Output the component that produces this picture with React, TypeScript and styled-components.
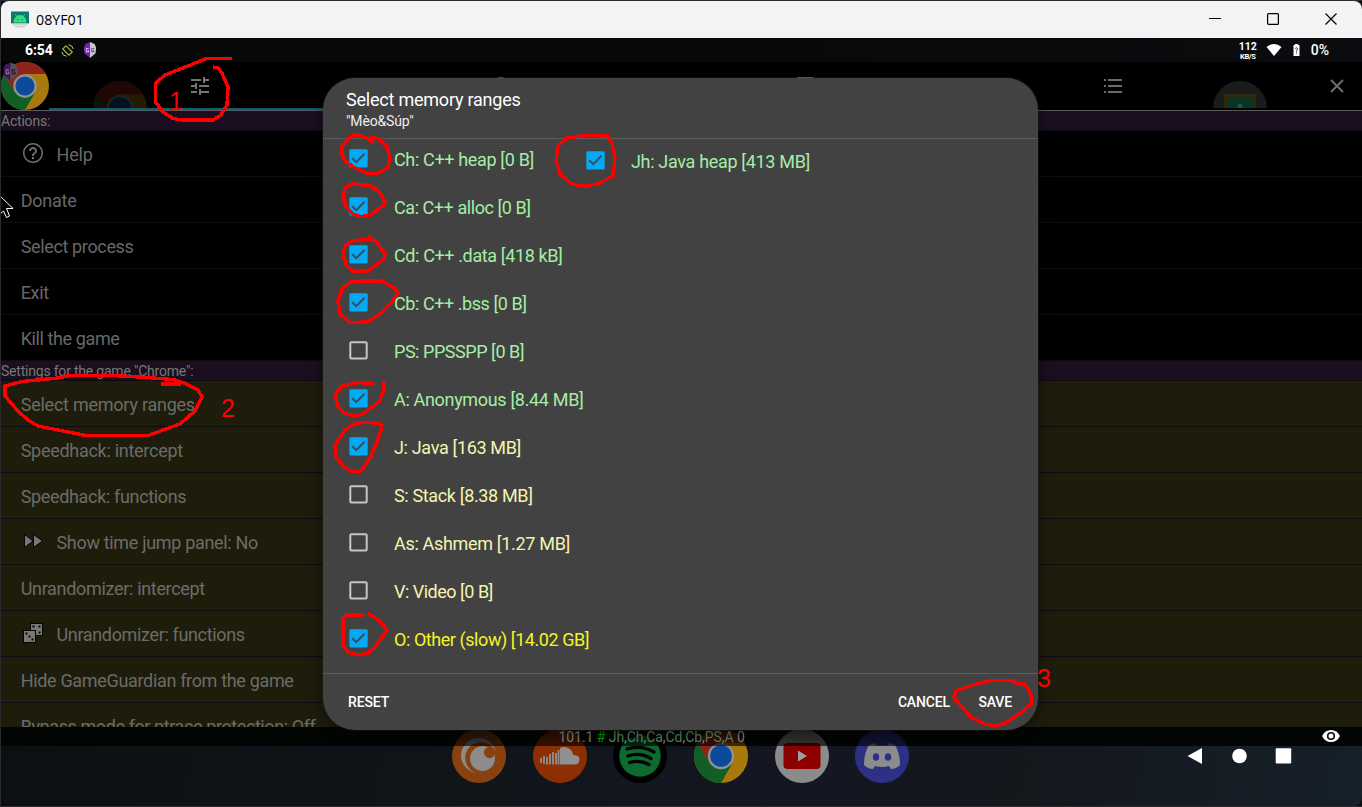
import React from "react";
import styled, { createGlobalStyle } from "styled-components";

const Global = createGlobalStyle`
  * { box-sizing: border-box; }
  body { margin: 0; background: #000; font-family: Roboto, "Liberation Sans", sans-serif; }
`;

const Window = styled.div`
  position: relative;
  width: 1362px;
  height: 807px;
  overflow: hidden;
  border: 1px solid #2c2a2c;
  border-right: 0;
  background: #0a0c0e;
  display: flex;
  flex-direction: column;
`;

const TitleBar = styled.header`
  height: 37px;
  flex: none;
  background: #f3f3f3;
  border-radius: 8px 8px 0 0;
  display: flex;
  align-items: center;
  justify-content: space-between;
  padding: 0 25px 1px 10px;
  color: #000;
`;

const AppName = styled.div`
  display: flex;
  align-items: center;
  gap: 7px;
  font: 15px/20px "Open Sans", "Noto Sans", sans-serif;
`;

const NameText = styled.span`
  display: inline-block;
  transform: scaleX(0.95);
  transform-origin: 0 50%;
`;

const WindowButtons = styled.div`
  display: flex;
  align-items: center;
  gap: 46px;
  svg { display: block; }
`;

const StatusBar = styled.div`
  height: 24px;
  flex: none;
  background: linear-gradient(90deg, #070909, #08090a 60%, #0b0c0f);
  display: flex;
  align-items: center;
  justify-content: space-between;
  padding: 0 33px 0 24px;
  color: #fff;
  font-size: 14px;
  font-weight: 500;
`;

const StatusGroup = styled.div<{ $gap: number }>`
  display: flex;
  align-items: center;
  gap: ${(p) => p.$gap}px;
  svg { display: block; }
`;

const Clock = styled.span`
  font-weight: 700;
  font-size: 14px;
  letter-spacing: -0.1px;
  margin-right: -1px;
`;

const Speed = styled.div`
  display: flex;
  flex-direction: column;
  align-items: center;
  font-size: 10.5px;
  line-height: 10px;
  font-weight: 700;
  margin: 2px -1px 0 0;
  small { font-size: 7.5px; line-height: 9px; letter-spacing: -0.4px; }
`;

const TabBar = styled.nav`
  height: 49px;
  flex: none;
  background: #000;
  border-bottom: 1px solid #5c5c5c;
  display: grid;
  grid-template-columns: 48px 302px 300px 308px 307px 1fr;
`;

const Tab = styled.div<{ $active?: boolean; $end?: boolean }>`
  display: flex;
  align-items: center;
  justify-content: ${(p) => (p.$end ? "flex-end" : "center")};
  padding-right: ${(p) => (p.$end ? 18 : 0)}px;
  box-shadow: ${(p) => (p.$active ? "inset 0 -2px #0e5c78" : "none")};
  svg { display: block; }
`;

const Ghost = styled.div<{ $x: number }>`
  position: absolute;
  left: ${(p) => p.$x}px;
  top: 80px;
  width: 54px;
  height: 27px;
  overflow: hidden;
`;

const List = styled.main`
  height: 616px;
  flex: none;
  overflow: hidden;
  background: #000;
`;

const Section = styled.div`
  height: 20px;
  background: #1b0e20;
  border-bottom: 1px solid #0d090f;
  color: #777;
  font-size: 14px;
  line-height: 20px;
  letter-spacing: -0.21px;
`;

const Row = styled.div<{ $olive?: boolean; $track: number }>`
  height: 46px;
  display: flex;
  align-items: center;
  padding: 2px 0 0 19.7px;
  background: ${(p) => (p.$olive ? "#1e1d0c" : "#000")};
  border-bottom: 1px solid ${(p) => (p.$olive ? "#0b0b10" : "#0d0d0d")};
  color: ${(p) => (p.$olive ? "#6c6c67" : "#686868")};
  font-size: 18px;
  letter-spacing: ${(p) => p.$track}px;
  white-space: nowrap;
`;

const RowIcon = styled.span`
  width: 35.8px;
  padding: 0 0 4px 2.3px;
  svg { display: block; }
`;

const FootBar = styled.div`
  position: relative;
  z-index: 2;
  height: 19px;
  flex: none;
  background: rgba(0, 0, 0, 0.65);
  display: flex;
  align-items: center;
  justify-content: space-between;
  padding: 0 22px 0 557.5px;
  color: #868686;
  font-size: 14px;
  svg { display: block; margin-bottom: 1px; }
`;

const Ranges = styled.span`
  letter-spacing: -0.06px;
  i { font-style: normal; color: #5b8a5b; }
  b { color: #00a000; font-weight: 400; }
`;

const Desktop = styled.div`
  flex: 1;
  background: linear-gradient(100deg, #0c1012, #10151a 35%, #141722 60%, #14171c 75%, #16202a);
  border-radius: 0 0 8px 8px;
  display: flex;
  justify-content: flex-end;
  padding: 2px 70px 0 0;
  gap: 27px;
  svg { display: block; }
`;

const Dock = styled.div`
  position: absolute;
  left: 451px;
  top: 728px;
  display: flex;
  gap: 26.7px;
  svg { display: block; }
`;

const Dialog = styled.section`
  position: absolute;
  left: 322px;
  top: 77px;
  width: 715px;
  height: 652px;
  z-index: 3;
  border-radius: 32px;
  background: #424242;
  box-shadow: 0 4px 14px rgba(0, 0, 0, 0.5), 0 0 0 1px rgba(60, 60, 60, 0.3);
  display: flex;
  flex-direction: column;
`;

const DialogHead = styled.div`
  height: 61px;
  padding: 11px 23px 0;
  border-bottom: 1px solid #5c5c5c;
  color: #fff;
`;

const Title = styled.div`
  font-size: 18px;
  line-height: 22px;
  letter-spacing: -0.22px;
`;

const Subtitle = styled.div`
  font-size: 14px;
  line-height: 21px;
  letter-spacing: -0.15px;
  color: #eee;
`;

const Options = styled.div`
  flex: 1;
  display: grid;
  grid-template-columns: 237px 1fr;
  grid-auto-rows: 48px;
  align-content: start;
  margin-top: -5px;
  padding-left: 26px;
`;

const Option = styled.label<{ $color: string; $track: number; $drop?: boolean }>`
  padding-top: ${(p) => (p.$drop ? 5 : 1)}px;
  display: flex;
  align-items: center;
  gap: 26px;
  color: ${(p) => p.$color};
  font-size: 18px;
  letter-spacing: ${(p) => p.$track}px;
  white-space: nowrap;
  svg { display: block; flex: none; }
  span { padding-top: 2px; }
`;

const DialogFoot = styled.div`
  height: 57px;
  border-top: 1px solid #5c5c5c;
  display: flex;
  align-items: center;
  padding: 0 26px 0 25px;
  color: #fff;
  font-size: 14px;
  font-weight: 500;
`;

const Action = styled.button<{ $push?: boolean; $gap?: number }>`
  border: 0;
  padding: 0;
  background: none;
  color: inherit;
  font: inherit;
  letter-spacing: -0.15px;
  margin-left: ${(p) => (p.$push ? "auto" : `${p.$gap ?? 0}px`)};
`;

const Overlay = styled.svg`
  position: absolute;
  left: -1px;
  top: -1px;
  z-index: 5;
`;

const Mark = styled.span<{ $x: number; $y: number }>`
  position: absolute;
  left: ${(p) => p.$x}px;
  top: ${(p) => p.$y}px;
  z-index: 6;
  color: #f00;
  font: 25px/28px "Liberation Sans", sans-serif;
`;

const Box = ({ on }: { on?: boolean }) => (
  <svg width="19" height="19" viewBox="0 0 19 19">
    {on ? (
      <>
        <rect x="0.3" y="0.3" width="18.4" height="18.2" rx="1.5" fill="#03a9f4" />
        <path d="M3.2 9.2 L7.3 13.2 L15.6 4.8" fill="none" stroke="#35505f" strokeWidth="2" />
      </>
    ) : (
      <rect x="1.3" y="1.2" width="16.4" height="16.4" rx="1" fill="none" stroke="#c6c6c6" strokeWidth="2" />
    )}
  </svg>
);

const Chrome = ({ size, dim = 1 }: { size: number; dim?: number }) => (
  <svg width={size} height={size} viewBox="0 0 54 54" opacity={dim}>
    <circle cx="27" cy="27" r="27" fill="#a87a0b" />
    <path d="M3.6 13.5 A27 27 0 0 1 50.4 13.5 H27 L15.3 33.8Z" fill="#8f231b" />
    <path d="M3.6 13.5 A27 27 0 0 0 27 54 L38.7 33.8 L27 40.5 L15.3 33.8Z" fill="#125e27" />
    <circle cx="27" cy="27" r="13.2" fill="#8f9394" />
    <circle cx="27" cy="27" r="10.8" fill="#0d4a9b" />
  </svg>
);

const Guardian = ({ w, h, dark }: { w: number; h: number; dark?: boolean }) => (
  <svg width={w} height={h} viewBox="0 0 14 17">
    <path d="M7 0 L2 2 0.5 6 1 12 7 17Z" fill={dark ? "#43165f" : "#7a1fb4"} />
    <path d="M7 0 L12 2 13.5 6 13 12 7 17Z" fill={dark ? "#55525a" : "#c9c4cf"} />
    <path d="M5.6 7 H3 V10.5 H5.4 V9 H4.6" fill="none" stroke={dark ? "#8a7896" : "#e4d4ee"} />
    <path d="M11.4 7 H8.8 V10.5 H11.2 V9 H10.4" fill="none" stroke={dark ? "#26142f" : "#6b3d87"} />
  </svg>
);

const green = "#a5eea5";
const cream = "#f4f4b0";

/* label, checked, colour, letter spacing */
const ranges: [string, boolean, string, number][] = [
  ["Ca: C++ alloc [0 B]", true, green, -0.44],
  ["Cd: C++ .data [418 kB]", true, green, -0.38],
  ["Cb: C++ .bss [0 B]", true, green, -0.44],
  ["PS: PPSSPP [0 B]", false, green, -0.46],
  ["A: Anonymous [8.44 MB]", true, green, -0.33],
  ["J: Java [163 MB]", true, cream, -0.34],
  ["S: Stack [8.38 MB]", false, cream, -0.35],
  ["As: Ashmem [1.27 MB]", false, cream, -0.32],
  ["V: Video [0 B]", false, cream, -0.5],
  ["O: Other (slow) [14.02 GB]", true, "#f4f422", -0.44],
];

const strokes = [
  "M232 58.5 H206 L193 64 L165 75 L155.5 83 V102 L163 112 L173 118.5 L182 120 H213 L221 115 L227 105 L228 87 L222 73 L218 68 L213 67",
  "M181 384 H161 M182 382 L173 379.5 L140 377 L112 375.5 H70 L58 378 L22 381.5 L5 386 V396 L18 411 L28 420 L38 426 L86 435.5 H148 L180 424 L195 411 L202 397 L198 390 L182 382",
  "M374 143 L368 139 L358 134.5 L350 137 L342 146 V154 L345 161 L355 168 L368 173.5 H378 L388 167 L390 157 L387 147 L379 139 L370 137",
  "M376 190 L370 185.5 L352 184 L345 188 L343 196 L346 207 L353 214 L361 216.5 L370 215 L383 206 L385 202 L380 193 L374 187",
  "M369 236 L373 240 L367 239 L352 241 L345 246 L343 254 L346 265 L353 271 H368 L384 259 L385 254 L378 244 L374 239",
  "M382 281 L367 281 L350 282 L342 289 L338 301 L340 314 L350 322.5 L367 322 L380 314 L391 303 L398 293 L394 288 L382 281",
  "M374 384 L358 382.5 L342 386 L335 395 L338 407 L344 413 L353 416 L363 414 L379 402 L384 390 V381",
  "M381 424 L370 422.5 L356 423 L345 430 L335 445 L336 457 L344 467 L352 471.5 L361 471 L370 458 L376 445 L381 430 L382 424",
  "M364 615 H347 L343 619 V645 L348 652 L358 655 L368 653 L376 646 L387 630 L383 625 L377 619 L368 613",
  "M607 136 L585 135.5 L567 138 L558 146 L556 161 L560 174 L572 184 L585 186.5 L600 183 L613 176 L615 158 L612 143 L607 135",
  "M1024 684 H1019 L1012 680.5 H991 L973 685 L956 690.5 L954 697 L960 705 L972 718 L985 724 L995 726 L1005 723 L1022 712 L1031 704 L1032 697 L1028 689 L1023 682",
];

export default function App() {
  return (
    <Window>
      <Global />
      <TitleBar>
        <AppName>
          <svg width="18" height="17" viewBox="0 0 18 17">
            <path d="M0 0.5H18V12.5H0Z" fill="#0a7a70" />
            <path d="M3 11 A6 6.5 0 0 1 15 11Z M4.5 3.5 L6 6 M13.5 3.5 L12 6" fill="#3ddc84" stroke="#3ddc84" />
            <path d="M6 8.5H7.5 M10.5 8.5H12" stroke="#0a7a70" />
            <path d="M0 12.5H18L16 14.5H2Z M4 15H14V16.5H4Z" fill="#d0d4d4" />
          </svg>
          <NameText>08YF01</NameText>
        </AppName>
        <WindowButtons>
          <svg width="12" height="12"><path d="M0 5.5H12" stroke="#000" /></svg>
          <svg width="12" height="12"><rect x="0.6" y="0.6" width="10.8" height="10.8" rx="1" fill="none" stroke="#000" strokeWidth="1.2" /></svg>
          <svg width="12" height="12"><path d="M0.5 0.5L11.5 11.5M11.5 0.5L0.5 11.5" stroke="#000" strokeWidth="1.2" /></svg>
        </WindowButtons>
      </TitleBar>

      <StatusBar>
        <StatusGroup $gap={9}>
          <Clock>6:54</Clock>
          <svg width="13" height="13" viewBox="0 0 13 13" fill="none">
            <path d="M5 1.8L11.2 8L8 11.2L1.8 5Z" stroke="#a4ba3f" strokeWidth="1.2" />
            <path d="M7.5 0.8Q11.5 1 12.2 5M5.5 12.2Q1.5 12 0.8 8" stroke="#b9bdb0" />
          </svg>
          <Guardian w={14} h={16} />
        </StatusGroup>
        <StatusGroup $gap={10}>
          <Speed><span>112</span><small>KB/S</small></Speed>
          <svg width="16" height="12" viewBox="0 0 16 12"><path d="M0.5 3Q8 -3 15.5 3L8 12Z" fill="#fff" /></svg>
          <svg width="9" height="12" viewBox="1.5 0 9 12"><path d="M4.5 0H7.5V1H9V12H3V1H4.5Z" fill="#fff" /><path d="M4.8 4.5Q6 3 7 4.5Q7 5.5 6 6.5V7.5M6 8.5V9.5" stroke="#222" fill="none" /></svg>
          <span>0%</span>
        </StatusGroup>
      </StatusBar>

      <TabBar>
        <Tab><Chrome size={48} /></Tab>
        <Tab $active>
          <svg width="24" height="24" viewBox="0 0 24 24" fill="#747474"><path d="M3 17v2h6v-2H3zM3 5v2h10V5H3zm10 16v-2h8v-2h-8v-2h-2v6h2zM7 9v2H3v2h4v2h2V9H7zm14 4v-2H11v2h10zm-6-4h2V7h4V5h-4V3h-2v6z" /></svg>
        </Tab>
        <Tab><svg width="20" height="20" viewBox="0 0 20 20"><circle cx="10" cy="9" r="7" fill="none" stroke="#747474" strokeWidth="2" /></svg></Tab>
        <Tab><svg width="16" height="20"><path d="M1 2H15V19H1Z" fill="none" stroke="#747474" strokeWidth="2" /></svg></Tab>
        <Tab>
          <svg width="18" height="14" viewBox="0 0 18 14" stroke="#6b6b6b" strokeWidth="2"><path d="M0 1H2M0 7H2M0 13H2M4 1H18M4 7H18M4 13H18" /></svg>
        </Tab>
        <Tab $end><svg width="14" height="14" viewBox="0 0 14 14" stroke="#707070" strokeWidth="1.8"><path d="M1 1L13 13M13 1L1 13" /></svg></Tab>
      </TabBar>

      <List>
        <Section>Actions:</Section>
        <Row $track={-0.2}>
          <RowIcon><svg width="20" height="20" viewBox="2 2 20 20" fill="#717171"><path d="M11 18h2v-2h-2v2zm1-16C6.48 2 2 6.48 2 12s4.48 10 10 10 10-4.48 10-10S17.52 2 12 2zm0 18.5c-4.7 0-8.5-3.8-8.5-8.5S7.3 3.5 12 3.5s8.5 3.8 8.5 8.5-3.8 8.5-8.5 8.5zM12 6c-2.21 0-4 1.79-4 4h2c0-1.1.9-2 2-2s2 .9 2 2c0 2-3 1.75-3 5h2c0-2.25 3-2.5 3-5 0-2.21-1.79-4-4-4z" /></svg></RowIcon>
          Help
        </Row>
        <Row $track={-0.22}>Donate</Row>
        <Row $track={-0.36}>Select process</Row>
        <Row $track={-0.3}>Exit</Row>
        <Row $track={-0.4}>Kill the game</Row>
        <Section>Settings for the game "Chrome":</Section>
        <Row $olive $track={-0.24}>Select memory ranges</Row>
        <Row $olive $track={-0.28}>Speedhack: intercept</Row>
        <Row $olive $track={-0.34}>Speedhack: functions</Row>
        <Row $olive $track={-0.32}>
          <RowIcon><svg width="20" height="14" viewBox="0 0 20 14"><path d="M1.5 0.5L10 7L1.5 13.5ZM10.5 0.5L19.5 7L10.5 13.5Z" fill="#777" stroke="#050505" /></svg></RowIcon>
          Show time jump panel: No
        </Row>
        <Row $olive $track={-0.32}>Unrandomizer: intercept</Row>
        <Row $olive $track={-0.35}>
          <RowIcon>
            <svg width="20" height="20" viewBox="0 0 20 20">
              <rect x="7.5" y="0.5" width="12" height="12" fill="#777" stroke="#050505" />
              <rect x="0.5" y="7.5" width="12" height="12" fill="#777" stroke="#050505" />
              <path d="M9.5 3.5h2M15.5 3.5h2M15.5 9.5h2M2.5 10.5h2M5.5 13.5h2M8.5 16.5h2" stroke="#050505" strokeWidth="2" />
            </svg>
          </RowIcon>
          Unrandomizer: functions
        </Row>
        <Row $olive $track={-0.33}>Hide GameGuardian from the game</Row>
        <Row $olive $track={-0.41}>Bypass mode for ptrace protection: Off</Row>
      </List>

      <FootBar>
        <Ranges>101.1 <b>#</b> <i>Jh</i>,<i>Ch</i>,<i>Ca</i>,<i>Cd</i>,<i>Cb</i>,<i>PS</i>,<i>A</i> 0</Ranges>
        <svg width="18" height="12" viewBox="0 0 18 12"><path d="M0 6Q3 0 9 0T18 6Q15 12 9 12T0 6Z" fill="#fff" /><circle cx="9" cy="6" r="3.3" fill="#fff" stroke="#0a0a0a" strokeWidth="1.6" /></svg>
      </FootBar>

      <Desktop>
        <svg width="17" height="17"><path d="M0.5 8L15 0V16Z" fill="#fff" /></svg>
        <svg width="17" height="17"><circle cx="8.5" cy="8" r="7.3" fill="#fff" /></svg>
        <svg width="17" height="17"><rect x="0.7" y="0.3" width="15.5" height="15.3" rx="1" fill="#fff" /></svg>
      </Desktop>

      <Dock>
        <svg width="54" height="54" viewBox="0 0 54 54"><circle cx="27" cy="27" r="27" fill="#87420f" /><circle cx="26.5" cy="26.5" r="17.5" fill="#8c8c8c" /><circle cx="29" cy="29" r="15.8" fill="#87420f" /><circle cx="30.5" cy="29.5" r="12.5" fill="#8c8c8c" /><circle cx="37.5" cy="23.5" r="5.5" fill="#87420f" /></svg>
        <svg width="54" height="54" viewBox="0 0 54 54"><circle cx="27" cy="27" r="27" fill="#8d2f03" /><path d="M27 19Q33 16 38 21Q40 24 40 26Q47 26 46.5 31Q46 35.5 42 35.5H27Z" fill="#909090" /><path d="M8 29V34M11 27V35M14 28V35.5M17 25V35.5M20 23V35.5M23 24V35.5M25.5 21V35.5" stroke="#909090" strokeWidth="1.8" /></svg>
        <svg width="54" height="54" viewBox="0 0 54 54"><circle cx="27" cy="27" r="27" fill="#000" /><circle cx="27" cy="27" r="20.7" fill="#0d6b2f" /><path d="M14 20Q28 15.5 41 23M15 27Q27 23 38 29.5M16.5 33.5Q27 30.5 36 35.5" stroke="#000" strokeWidth="3.2" fill="none" strokeLinecap="round" /></svg>
        <Chrome size={54} />
        <svg width="54" height="54" viewBox="0 0 54 54"><circle cx="27" cy="27" r="27" fill="#8b8b8b" /><rect x="8.5" y="14" width="37" height="26" rx="4" fill="#8c0000" /><path d="M23 21.5V32.5L32 27Z" fill="#a0a0a0" /></svg>
        <svg width="54" height="54" viewBox="0 0 54 54"><circle cx="27" cy="27" r="27" fill="#2c3185" /><path d="M20 14L14 16Q9 24 9 36Q13 40 18 40L20 37Q27 39 34 37L36 40Q41 40 45 36Q45 24 40 16L34 14L32.5 16.5H21.5Z" fill="#8c8c8c" /><ellipse cx="21" cy="28" rx="3.2" ry="3.8" fill="#2c3185" /><ellipse cx="33" cy="28" rx="3.2" ry="3.8" fill="#2c3185" /></svg>
      </Dock>

      <Ghost $x={92}><Chrome size={54} dim={0.22} /></Ghost>
      <Ghost $x={1212}>
        <svg width="54" height="54" viewBox="0 0 54 54"><circle cx="27" cy="27" r="27" fill="#1b1b1b" /><path d="M11 13H43V41H11Z" fill="#32270a" /><path d="M14 16H40V41H14Z" fill="#083625" /><circle cx="27" cy="25" r="2.5" fill="#285141" /></svg>
      </Ghost>

      <Dialog>
        <DialogHead>
          <Title>Select memory ranges</Title>
          <Subtitle>"Mèo&amp;Súp"</Subtitle>
        </DialogHead>
        <Options>
          <Option $color={green} $track={-0.35}><Box on /><span>Ch: C++ heap [0 B]</span></Option>
          <Option $color={green} $track={-0.33} $drop><Box on /><span>Jh: Java heap [413 MB]</span></Option>
          {ranges.map(([label, on, color, track]) => (
            <React.Fragment key={label}>
              <Option $color={color} $track={track}><Box on={on} /><span>{label}</span></Option>
              <div />
            </React.Fragment>
          ))}
        </Options>
        <DialogFoot>
          <Action>RESET</Action>
          <Action $push>CANCEL</Action>
          <Action $gap={28.5}>SAVE</Action>
        </DialogFoot>
      </Dialog>

      <Overlay width="1362" height="807" fill="none">
        <g transform="translate(3 62)"><Guardian w={15} h={19} dark /></g>
        <path d="M-3 193L13 208.5H6.5L9.5 216L6.5 217.5L3.5 211L-1 215Z" fill="#000" stroke="#fff" />
        <g stroke="#f00" strokeWidth="3.4" strokeLinejoin="round" shapeRendering="crispEdges">
          {strokes.map((d) => <path key={d} d={d} />)}
        </g>
      </Overlay>
      <Mark $x={168} $y={86}>1</Mark>
      <Mark $x={220} $y={393}>2</Mark>
      <Mark $x={1036} $y={663}>3</Mark>
    </Window>
  );
}
